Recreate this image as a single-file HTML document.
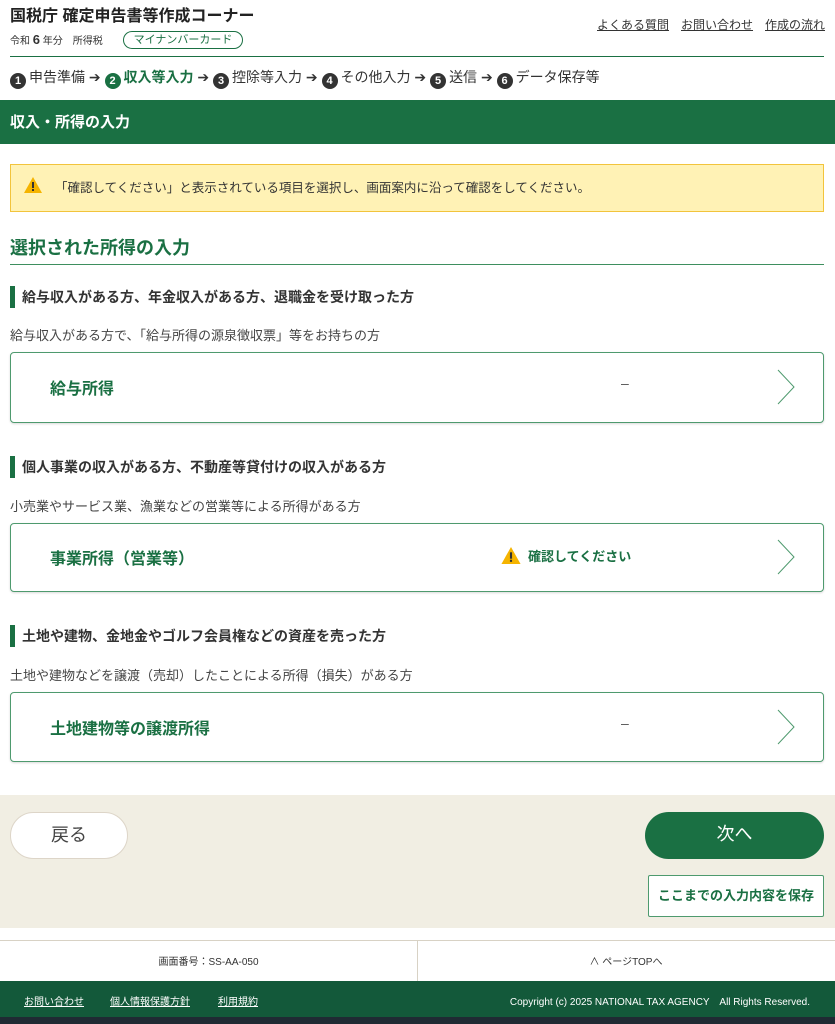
<!DOCTYPE html>
<html><head><meta charset="utf-8"><style>
*{box-sizing:border-box;margin:0;padding:0}
body{width:835px;height:1024px;overflow:hidden;background:#fff;font-family:"Liberation Sans","Noto Sans CJK JP",sans-serif;color:#333;position:relative}
.a{position:absolute;white-space:nowrap}
.g{color:#1a7043}
.circ{display:inline-block;width:16px;height:16px;border-radius:50%;background:#333;color:#fff;font-size:11px;font-weight:bold;text-align:center;line-height:16px;vertical-align:-2px;margin-right:3px}
.card{position:absolute;left:10px;width:814px;border:1px solid #4e9a6e;border-radius:4px;background:#fff;box-shadow:0 1px 2px rgba(0,0,0,.15)}
.card .t{position:absolute;left:39px;font-size:16px;font-weight:bold;color:#1a7043}
.card .d{position:absolute;left:610px;font-size:14px;color:#555}
.sh{position:absolute;left:10px;border-left:5px solid #1a7043;padding-left:7px;font-size:14px;font-weight:bold;height:22px;line-height:22px}
.desc{position:absolute;left:10px;font-size:13px;color:#444}
.chev{position:absolute;right:27px;width:20px;height:36px}
.lk{position:absolute;top:16px;font-size:12px;text-decoration:underline}
</style></head><body>
<div class="a" style="left:10px;top:2px;font-size:16px;font-weight:bold;color:#222">国税庁 確定申告書等作成コーナー</div>
<div class="a" style="left:10px;top:32px;font-size:10px">令和 <b style="font-size:13px">6</b> 年分　所得税</div>
<div class="a" style="left:123px;top:31px;width:120px;height:18px;border:1px solid #1a7043;border-radius:9px;font-size:11px;text-align:center;line-height:16px"><span class="g">マイナンバーカード</span></div>
<span class="lk" style="left:597px">よくある質問</span>
<span class="lk" style="left:681px">お問い合わせ</span>
<span class="lk" style="left:765px">作成の流れ</span>
<div class="a" style="left:10px;top:56px;width:814px;border-top:1px solid #1a7043"></div>
<div class="a" style="left:10px;top:67px;font-size:14px"><span class="circ">1</span>申告準備 ➔ <span class="circ" style="background:#1a7043">2</span><b class="g">収入等入力</b> ➔ <span class="circ">3</span>控除等入力 ➔ <span class="circ">4</span>その他入力 ➔ <span class="circ">5</span>送信 ➔ <span class="circ">6</span>データ保存等</div>
<div class="a" style="left:0;top:100px;width:835px;height:44px;background:#1a7043;color:#fff;font-size:15px;font-weight:bold;padding:11px 10px">収入・所得の入力</div>
<div class="a" style="left:10px;top:164px;width:814px;height:48px;background:#fff2b5;border:1px solid #f2c43c;font-size:12.5px;padding:12px 0 0 44px">「確認してください」と表示されている項目を選択し、画面案内に沿って確認をしてください。
<svg style="position:absolute;left:13px;top:12px" width="18" height="16" viewBox="0 0 18 16"><path d="M9 0L18 16H0z" fill="#f5b400"/><rect x="8" y="5" width="2" height="6" fill="#333"/><rect x="8" y="12" width="2" height="2" fill="#333"/></svg></div>
<div class="a g" style="left:10px;top:234px;font-size:18px;font-weight:bold">選択された所得の入力</div>
<div class="a" style="left:10px;top:264px;width:814px;border-top:1px solid #3e8f5f"></div>

<div class="sh" style="top:286px">給与収入がある方、年金収入がある方、退職金を受け取った方</div>
<div class="desc" style="top:325px">給与収入がある方で、「給与所得の源泉徴収票」等をお持ちの方</div>
<div class="card" style="top:352px;height:71px"><div class="t" style="top:22px">給与所得</div><div class="d" style="top:22px">–</div><svg class="chev" style="top:16px" viewBox="0 0 20 36"><path d="M2 1L18 18L2 35" fill="none" stroke="#4e9a6e" stroke-width="1"/></svg></div>

<div class="sh" style="top:456px">個人事業の収入がある方、不動産等貸付けの収入がある方</div>
<div class="desc" style="top:496px">小売業やサービス業、漁業などの営業等による所得がある方</div>
<div class="card" style="top:523px;height:69px"><div class="t" style="top:21px">事業所得（営業等）</div>
<svg style="position:absolute;left:490px;top:23px" width="20" height="17" viewBox="0 0 18 16"><path d="M9 0L18 16H0z" fill="#f5b400"/><rect x="8" y="5" width="2" height="6" fill="#333"/><rect x="8" y="12" width="2" height="2" fill="#333"/></svg>
<div class="a g" style="left:517px;top:22px;font-size:13px;font-weight:bold">確認してください</div>
<svg class="chev" style="top:15px" viewBox="0 0 20 36"><path d="M2 1L18 18L2 35" fill="none" stroke="#4e9a6e" stroke-width="1"/></svg></div>

<div class="sh" style="top:625px">土地や建物、金地金やゴルフ会員権などの資産を売った方</div>
<div class="desc" style="top:665px">土地や建物などを譲渡（売却）したことによる所得（損失）がある方</div>
<div class="card" style="top:692px;height:70px"><div class="t" style="top:22px">土地建物等の譲渡所得</div><div class="d" style="top:22px">–</div><svg class="chev" style="top:16px" viewBox="0 0 20 36"><path d="M2 1L18 18L2 35" fill="none" stroke="#4e9a6e" stroke-width="1"/></svg></div>

<div class="a" style="left:0;top:795px;width:835px;height:133px;background:#f1eee3"></div>
<div class="a" style="left:10px;top:812px;width:118px;height:47px;border:1px solid #ddd5c8;border-radius:24px;background:#fff;font-size:18px;text-align:center;line-height:45px;color:#444">戻る</div>
<div class="a" style="left:645px;top:812px;width:179px;height:47px;border-radius:24px;background:#1a7043;font-size:18px;text-align:center;line-height:45px;color:#fff">次へ</div>
<div class="a g" style="left:648px;top:875px;width:176px;height:42px;border:1px solid #4e9a6e;border-radius:2px;background:#fff;font-size:13px;font-weight:bold;text-align:center;line-height:40px">ここまでの入力内容を保存</div>

<div class="a" style="left:0;top:940px;width:835px;height:41px;border-top:1px solid #d8d2c5"></div>
<div class="a" style="left:417px;top:941px;height:40px;border-left:1px solid #d8d2c5"></div>
<div class="a" style="left:0;top:953px;width:417px;text-align:center;font-size:10px">画面番号：SS-AA-050</div>
<div class="a" style="left:417px;top:953px;width:418px;text-align:center;font-size:10px">∧ ページTOPへ</div>
<div class="a" style="left:0;top:981px;width:835px;height:36px;background:#13593a;color:#fff;font-size:10px">
<span class="a" style="left:24px;top:12px;text-decoration:underline">お問い合わせ</span>
<span class="a" style="left:110px;top:12px;text-decoration:underline">個人情報保護方針</span>
<span class="a" style="left:218px;top:12px;text-decoration:underline">利用規約</span>
<span class="a" style="right:25px;top:12px">Copyright (c) 2025 NATIONAL TAX AGENCY　All Rights Reserved.</span></div>
<div class="a" style="left:0;top:1017px;width:835px;height:7px;background:#1f2a33"></div>
</body></html>
